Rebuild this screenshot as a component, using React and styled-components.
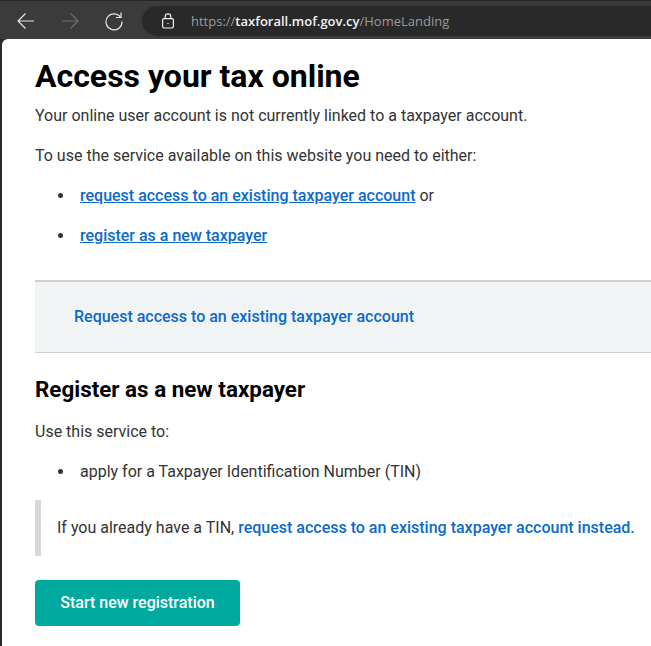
import React from "react";
import styled, { createGlobalStyle } from "styled-components";

const GlobalStyle = createGlobalStyle`
  html, body {
    margin: 0;
    padding: 0;
    background: #2b2b2b;
  }
  body {
    font-family: Roboto, "Liberation Sans", sans-serif;
    overflow: hidden;
  }
`;

function BackIcon() {
  return (
    <svg width="20" height="20" viewBox="0 0 20 20" fill="none" stroke="#e6e6e6" strokeWidth="1.2">
      <path d="M18 10H2M9.5 2.5 2 10l7.5 7.5" />
    </svg>
  );
}

function ForwardIcon() {
  return (
    <svg width="20" height="20" viewBox="0 0 20 20" fill="none" stroke="#6e6e6e" strokeWidth="1.2">
      <path d="M2 10h16M10.5 2.5 18 10l-7.5 7.5" />
    </svg>
  );
}

function ReloadIcon() {
  return (
    <svg width="20" height="20" viewBox="0 0 20 20" fill="none" stroke="#e6e6e6" strokeWidth="1.2">
      <path d="M16.5 6.2A8 8 0 1 0 18 10.5" />
      <path d="M17 1.5v5h-5" />
    </svg>
  );
}

function LockIcon() {
  return (
    <svg width="14" height="16" viewBox="0 0 14 16" fill="none" stroke="#f0f0f0" strokeWidth="1.2">
      <rect x="1.6" y="5.6" width="10.8" height="9.4" rx="1.4" />
      <path d="M4.2 5.6V3.6a2.8 2.8 0 0 1 5.6 0v2" />
      <circle cx="7" cy="10.4" r="0.7" fill="#f0f0f0" stroke="none" />
    </svg>
  );
}

export default function App() {
  return (
    <>
      <GlobalStyle />
      <StyledWindow>
        <StyledToolbar>
          <StyledNavButton><BackIcon /></StyledNavButton>
          <StyledNavButton><ForwardIcon /></StyledNavButton>
          <StyledNavButton><ReloadIcon /></StyledNavButton>
          <StyledAddressBar>
            <LockIcon />
            <StyledUrl>
              https://<strong>taxforall.mof.gov.cy</strong>/HomeLanding
            </StyledUrl>
          </StyledAddressBar>
        </StyledToolbar>
        <StyledPage>
          <StyledTitle>Access your tax online</StyledTitle>
          <StyledText>Your online user account is not currently linked to a taxpayer account.</StyledText>
          <StyledText>To use the service available on this website you need to either:</StyledText>
          <StyledList>
            <li><StyledUnderlinedLink href="#">request access to an existing taxpayer account</StyledUnderlinedLink> or</li>
            <li><StyledUnderlinedLink href="#">register as a new taxpayer</StyledUnderlinedLink></li>
          </StyledList>
          <StyledAccessPanel>
            <StyledLink href="#">Request access to an existing taxpayer account</StyledLink>
          </StyledAccessPanel>
          <StyledSubtitle>Register as a new taxpayer</StyledSubtitle>
          <StyledText>Use this service to:</StyledText>
          <StyledList>
            <li>apply for a Taxpayer Identification Number (TIN)</li>
          </StyledList>
          <StyledInset>
            <span>If you already have a TIN, <StyledLink href="#">request access to an existing taxpayer account instead.</StyledLink></span>
          </StyledInset>
          <StyledStartButton>Start new registration</StyledStartButton>
        </StyledPage>
      </StyledWindow>
    </>
  );
}

const StyledWindow = styled.div`
  width: 651px;
  height: 646px;
  display: flex;
  flex-direction: column;
  overflow: hidden;
  background: #2b2b2b;
`;

const StyledToolbar = styled.div`
  flex: none;
  height: 39px;
  display: flex;
  align-items: center;
  padding: 1px 0 0 16px;
  box-sizing: border-box;
  background: #3b3b3b;
  border-top: 1px solid #262626;
`;

const StyledNavButton = styled.div`
  width: 20px;
  height: 20px;
  margin-right: 24px;
  display: flex;
  align-items: center;
  justify-content: center;
`;

const StyledAddressBar = styled.div`
  flex: 1;
  height: 30px;
  margin-left: -6px;
  padding-left: 19px;
  display: flex;
  align-items: center;
  gap: 16px;
  background: #292929;
  border-radius: 15px 0 0 15px;
`;

const StyledUrl = styled.span`
  font-family: "Open Sans", "Liberation Sans", sans-serif;
  font-size: 13px;
  color: #9a9a9a;

  strong {
    font-weight: 600;
    color: #f2f2f2;
  }
`;

const StyledPage = styled.main`
  flex: 1;
  margin-left: 2px;
  padding: 19px 0 0 33px;
  background: #ffffff;
  border-top-left-radius: 6px;
  color: #333333;
  font-size: 16px;
  line-height: 24px;
`;

const StyledTitle = styled.h1`
  margin: 0 0 10px;
  font-size: 32px;
  line-height: 36px;
  font-weight: 700;
  color: #000000;
`;

const StyledText = styled.p`
  margin: 0 0 16px;
`;

const StyledList = styled.ul`
  margin: 0;
  padding: 0 0 0 23px;
  list-style: none;

  li {
    margin-bottom: 16px;
  }
  li::before {
    content: "";
    display: inline-block;
    width: 5px;
    height: 5px;
    margin-right: 17px;
    border-radius: 50%;
    background: #333333;
    vertical-align: 3px;
  }
`;

const StyledLink = styled.a`
  color: #0b6acb;
  font-weight: 500;
  text-decoration: none;
`;

const StyledUnderlinedLink = styled(StyledLink)`
  text-decoration: underline;
`;

const StyledAccessPanel = styled.div`
  height: 73px;
  margin-top: 32px;
  padding-left: 39px;
  display: flex;
  align-items: center;
  box-sizing: border-box;
  background: #f0f4f5;
  border-top: 2px solid #d0d0d0;
  border-bottom: 1px solid #d0d0d0;
`;

const StyledSubtitle = styled.h2`
  margin: 20px 0 15px;
  font-size: 22.4px;
  line-height: 32px;
  font-weight: 700;
  color: #000000;
`;

const StyledInset = styled.div`
  height: 56px;
  margin-top: 16px;
  padding-left: 16px;
  display: flex;
  align-items: center;
  border-left: 6px solid #d8d8d8;
`;

const StyledStartButton = styled.button`
  display: block;
  width: 205px;
  height: 46px;
  margin-top: 24px;
  padding: 0 0 2px;
  border: none;
  border-radius: 4px;
  background: #00a99d;
  color: #ffffff;
  font-family: inherit;
  font-size: 16px;
  font-weight: 500;
`;
